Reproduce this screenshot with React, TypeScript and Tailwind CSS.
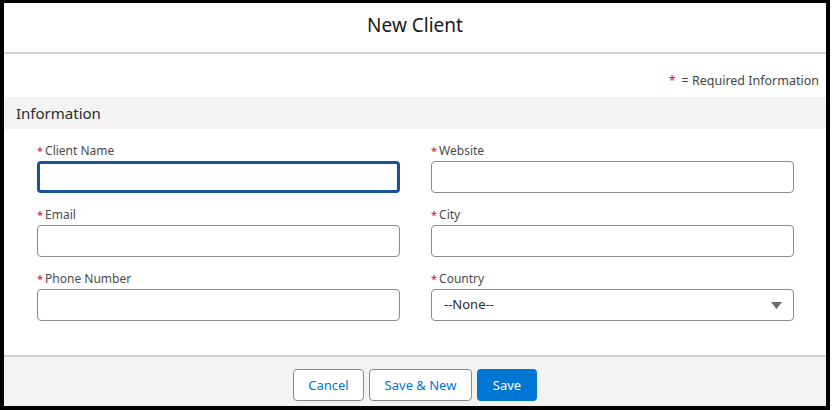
import React from "react";

const font = { fontFamily: '"Noto Sans", "Open Sans", sans-serif' };

function Label({ text }: { text: string }) {
  return (
    <div className="h-[18px] leading-[18px] text-[12px] text-[#4a4a4a] flex items-center pt-[1px]">
      <span className="text-[#ea001e] mr-[2px] text-[11px]">*</span>
      <span>{text}</span>
    </div>
  );
}

function Field({ label, focused }: { label: string; focused?: boolean }) {
  return (
    <div className="flex flex-col gap-[2px]">
      <Label text={label} />
      <div
        className={
          focused
            ? "h-[32px] rounded-[4px] border-[3px] border-[#1b5297] bg-white"
            : "h-[32px] rounded-[4px] border border-[#8a8a8a] bg-white"
        }
      />
    </div>
  );
}

function SelectField({ label }: { label: string }) {
  return (
    <div className="flex flex-col gap-[2px]">
      <Label text={label} />
      <div className="h-[32px] rounded-[4px] border border-[#8a8a8a] bg-white flex items-center justify-between pl-[12px] pr-[11px] text-[13px] text-[#2b2b2b]">
        <span>--None--</span>
        <svg width="11" height="7" viewBox="0 0 11 7">
          <path d="M0 0 H11 L5.5 7 Z" fill="#6b6b6b" />
        </svg>
      </div>
    </div>
  );
}

export default function App() {
  return (
    <div className="w-[833px] h-[410px] bg-white" style={font}>
      <div className="w-[830px] h-[410px] border-t-[3px] border-l-[4px] border-r-[4px] border-b-[4px] border-black flex flex-col bg-white">
        <div className="h-[49px] shrink-0 flex items-center justify-center pb-[4px] text-[19px] text-[#181818]">
          New Client
        </div>
        <div className="h-[2px] shrink-0 bg-[#d0d0d0]" />
        <div className="h-[43px] shrink-0 flex items-end justify-end pr-[7px] pb-[6px] text-[12.5px] text-[#444444]">
          <span className="text-[#ea001e] mr-[6px]">*</span>
          <span>= Required Information</span>
        </div>
        <div className="h-[32px] shrink-0 bg-[#f3f3f3] flex items-center pl-[12px] text-[15px] text-[#2b2b2b]">
          Information
        </div>
        <div className="flex-1 grid grid-cols-2 gap-x-[31px] gap-y-[12px] pl-[33px] pr-[32px] pt-[12px] content-start">
          <Field label="Client Name" focused />
          <Field label="Website" />
          <Field label="Email" />
          <Field label="City" />
          <Field label="Phone Number" />
          <SelectField label="Country" />
        </div>
        <div className="h-[2px] shrink-0 bg-[#d0d0d0]" />
        <div className="h-[49px] shrink-0 bg-[#f3f3f3] flex justify-center gap-[5px] pt-[12px]">
          <button className="h-[32px] w-[71px] rounded-[4px] border border-[#8a8a8a] bg-white text-[13px] text-[#0176d3] pt-[1px]">
            Cancel
          </button>
          <button className="h-[32px] w-[103px] rounded-[4px] border border-[#8a8a8a] bg-white text-[13px] text-[#0176d3] pt-[1px]">
            Save &amp; New
          </button>
          <button className="h-[32px] w-[60px] rounded-[4px] bg-[#0176d3] text-[13px] text-white pt-[1px]">
            Save
          </button>
        </div>
      </div>
    </div>
  );
}
